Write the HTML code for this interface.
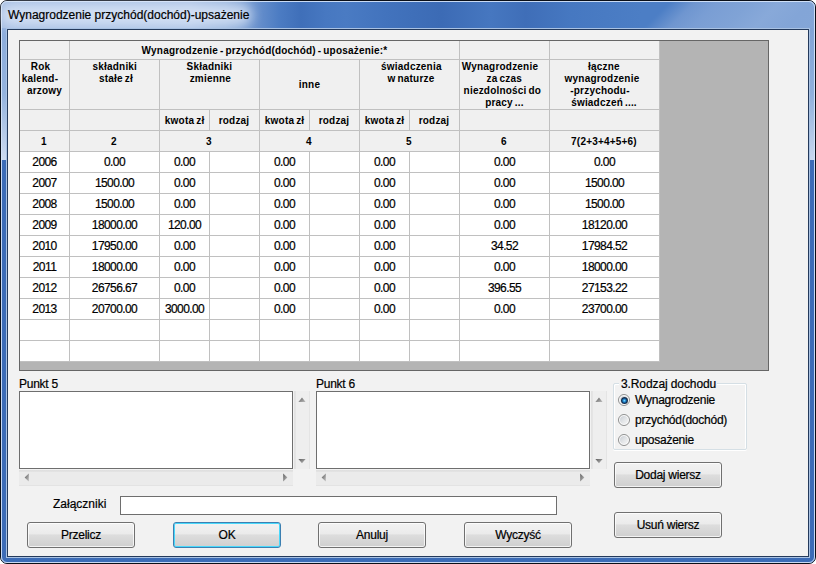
<!DOCTYPE html>
<html><head><meta charset="utf-8">
<style>
*{box-sizing:border-box;margin:0;padding:0}
html,body{width:816px;height:564px;overflow:hidden;background:#fff}
body{position:relative;font-family:"Liberation Sans",sans-serif;font-size:12px;color:#000}
.a{position:absolute}
#win{left:0;top:0;width:816px;height:564px;border:1px solid #0a0f18;border-radius:7px 7px 7px 7px;
 background:linear-gradient(to right,#a4bde3 0px,#a9c1e5 190px,#94b2dc 225px,#6d94ce 252px,#4c7cc3 278px,#3f6fb9 300px,#4778c1 325px,#4a7bc3 345px,#4273bd 385px,#3c6bb5 440px,#4677c0 490px,#3f6eb8 525px,#4678c1 570px,#4c7ec5 640px,#4c7ec5 816px)}
#tbr{left:600px;top:1px;width:215px;height:28px;border-radius:0 6px 0 0;background:linear-gradient(135deg,rgba(76,126,197,0) 0px,rgba(76,126,197,0) 50px,#6f96d0 68px,#7a9ed4 84px,#80a3d6 108px,#88a9d9 128px,#83a5d7 150px,#84a6d7 172px)}
#hl{left:1px;top:1px;width:814px;height:562px;border:1px solid rgba(215,230,250,.9);border-radius:6px 6px 6px 6px}
#side{left:1px;top:29px;width:814px;height:534px;background:#3c6cb7;border-radius:0 0 6px 6px}
#sl{left:1px;top:28px;width:7px;height:132px;background:linear-gradient(#8cacdb 0%,#94b3de 50%,#cddbf0 100%)}
#sr{left:808px;top:28px;width:7px;height:132px;background:linear-gradient(#82a4d6 0%,#8fb0dc 50%,#c8d7ee 100%)}
#glow{left:0px;top:4px;width:252px;height:22px;border-radius:11px;background:rgba(224,234,248,.75);filter:blur(6px)}
#title{left:8px;top:8px;font-size:12px;line-height:14px;color:#000;white-space:pre;-webkit-text-stroke:0.2px #000}
#cl1{left:6px;top:28px;width:804px;height:530px;border:1px solid #a9c2e3}
#cl2{left:7px;top:29px;width:802px;height:528px;border:1px solid #243a5c;background:#f2f2f2}
#cl3{display:none}
#gridout{display:none}
#grid{left:19px;top:40px;width:750px;height:331px;border:1px solid #666;background:#b4b4b4}
.hc{position:absolute;background:#f0f0f0}
.dc{position:absolute;background:#fff}
.ht{position:absolute;font-weight:bold;font-size:10px;text-align:center;line-height:12px;white-space:pre;letter-spacing:0.2px;word-spacing:-1px}
.dt{position:absolute;font-size:12px;text-align:center;letter-spacing:-0.6px;white-space:pre;line-height:20px;-webkit-text-stroke:0.2px #000}
.lbl{position:absolute;font-size:12px;line-height:14px;white-space:pre;-webkit-text-stroke:0.2px #000;letter-spacing:-0.25px}
.tb{position:absolute;background:#fff;border:1px solid #6e6e6e}
.sbv{position:absolute;background:linear-gradient(to right,#e1e1e1 0px,#e5e5e5 2px,#eeeeee 2px,#eeeeee 15px,#e4e4e4 15px,#e4e4e4 16px)}
.sbh{position:absolute;background:linear-gradient(#dedede 0px,#e4e4e4 2px,#ebebeb 2px,#ebebeb 15px,#e3e3e3 15px,#e3e3e3 16px)}
.btn{position:absolute;border:1px solid #707070;border-radius:3px;background:linear-gradient(#f2f2f2 0%,#ebebeb 45%,#dddddd 50%,#cfcfcf 100%);box-shadow:inset 0 0 0 1px rgba(255,255,255,.75);text-align:center;font-size:12px;line-height:24px;white-space:pre;-webkit-text-stroke:0.2px #000;letter-spacing:-0.25px}
.btn.def{border-color:#3c7fb1;box-shadow:inset 0 0 0 1px #48d8fb}
.radio{position:absolute;width:12px;height:12px;border-radius:50%;border:1px solid #8e8f8f;background:#fcfcfc}
.radio::after{content:"";position:absolute;left:1px;top:1px;width:8px;height:8px;border-radius:50%;background:linear-gradient(135deg,#c9ced4 0%,#e4e6e8 55%,#f6f6f6 100%)}
.dot{position:absolute;left:1.5px;top:1.5px;width:7px;height:7px;border-radius:50%;z-index:2;background:radial-gradient(circle closest-side at 48% 52%,#8fe0ff 0%,#2e9ce0 32%,#17609e 58%,#0e2c4f 82%,#2a3b52 100%)}
</style></head><body>
<svg class="a" style="left:0;top:0" width="0" height="0"><defs>
<linearGradient id="gu" x1="0" y1="0" x2="1" y2="1"><stop offset="0" stop-color="#5c5c5c"/><stop offset="1" stop-color="#bdbdbd"/></linearGradient>
<linearGradient id="gd" x1="0" y1="0" x2="1" y2="1"><stop offset="0" stop-color="#5c5c5c"/><stop offset="1" stop-color="#bdbdbd"/></linearGradient>
<linearGradient id="gl" x1="0" y1="0" x2="1" y2="1"><stop offset="0" stop-color="#5c5c5c"/><stop offset="1" stop-color="#c4c4c4"/></linearGradient>
<linearGradient id="gr" x1="0" y1="0" x2="1" y2="1"><stop offset="0" stop-color="#5c5c5c"/><stop offset="1" stop-color="#c4c4c4"/></linearGradient>
</defs></svg>
<div id="win" class="a"></div>
<div id="tbr" class="a"></div>
<div id="side" class="a"></div>
<div id="sl" class="a"></div>
<div id="sr" class="a"></div>
<div id="hl" class="a"></div>
<div id="glow" class="a"></div>
<div id="title" class="a">Wynagrodzenie przychód(dochód)-upsażenie</div>
<div id="cl1" class="a"></div>
<div id="cl2" class="a"></div>
<div id="cl3" class="a"></div>

<div id="gridout" class="a"></div>
<div id="grid" class="a"></div>
<div class="a" style="left:20px;top:41px;width:640px;height:321px;background:#c0c0c0"></div>
<div class="hc" style="left:20px;top:41px;width:49px;height:18px;"></div>
<div class="hc" style="left:70px;top:41px;width:389px;height:18px;"></div>
<div class="hc" style="left:460px;top:41px;width:89px;height:18px;"></div>
<div class="hc" style="left:550px;top:41px;width:109px;height:18px;"></div>
<div class="hc" style="left:20px;top:60px;width:49px;height:49px;"></div>
<div class="hc" style="left:70px;top:60px;width:89px;height:49px;"></div>
<div class="hc" style="left:160px;top:60px;width:99px;height:49px;"></div>
<div class="hc" style="left:260px;top:60px;width:99px;height:49px;"></div>
<div class="hc" style="left:360px;top:60px;width:99px;height:49px;"></div>
<div class="hc" style="left:460px;top:60px;width:89px;height:49px;"></div>
<div class="hc" style="left:550px;top:60px;width:109px;height:49px;"></div>
<div class="hc" style="left:20px;top:110px;width:49px;height:20px;"></div>
<div class="hc" style="left:70px;top:110px;width:89px;height:20px;"></div>
<div class="hc" style="left:160px;top:110px;width:49px;height:20px;"></div>
<div class="hc" style="left:210px;top:110px;width:49px;height:20px;"></div>
<div class="hc" style="left:260px;top:110px;width:49px;height:20px;"></div>
<div class="hc" style="left:310px;top:110px;width:49px;height:20px;"></div>
<div class="hc" style="left:360px;top:110px;width:49px;height:20px;"></div>
<div class="hc" style="left:410px;top:110px;width:49px;height:20px;"></div>
<div class="hc" style="left:460px;top:110px;width:89px;height:20px;"></div>
<div class="hc" style="left:550px;top:110px;width:109px;height:20px;"></div>
<div class="hc" style="left:20px;top:131px;width:49px;height:20px;"></div>
<div class="hc" style="left:70px;top:131px;width:89px;height:20px;"></div>
<div class="hc" style="left:160px;top:131px;width:99px;height:20px;"></div>
<div class="hc" style="left:260px;top:131px;width:99px;height:20px;"></div>
<div class="hc" style="left:360px;top:131px;width:99px;height:20px;"></div>
<div class="hc" style="left:460px;top:131px;width:89px;height:20px;"></div>
<div class="hc" style="left:550px;top:131px;width:109px;height:20px;"></div>
<div class="dc" style="left:20px;top:152px;width:49px;height:20px;"></div>
<div class="dc" style="left:70px;top:152px;width:89px;height:20px;"></div>
<div class="dc" style="left:160px;top:152px;width:49px;height:20px;"></div>
<div class="dc" style="left:210px;top:152px;width:49px;height:20px;"></div>
<div class="dc" style="left:260px;top:152px;width:49px;height:20px;"></div>
<div class="dc" style="left:310px;top:152px;width:49px;height:20px;"></div>
<div class="dc" style="left:360px;top:152px;width:49px;height:20px;"></div>
<div class="dc" style="left:410px;top:152px;width:49px;height:20px;"></div>
<div class="dc" style="left:460px;top:152px;width:89px;height:20px;"></div>
<div class="dc" style="left:550px;top:152px;width:109px;height:20px;"></div>
<div class="dc" style="left:20px;top:173px;width:49px;height:20px;"></div>
<div class="dc" style="left:70px;top:173px;width:89px;height:20px;"></div>
<div class="dc" style="left:160px;top:173px;width:49px;height:20px;"></div>
<div class="dc" style="left:210px;top:173px;width:49px;height:20px;"></div>
<div class="dc" style="left:260px;top:173px;width:49px;height:20px;"></div>
<div class="dc" style="left:310px;top:173px;width:49px;height:20px;"></div>
<div class="dc" style="left:360px;top:173px;width:49px;height:20px;"></div>
<div class="dc" style="left:410px;top:173px;width:49px;height:20px;"></div>
<div class="dc" style="left:460px;top:173px;width:89px;height:20px;"></div>
<div class="dc" style="left:550px;top:173px;width:109px;height:20px;"></div>
<div class="dc" style="left:20px;top:194px;width:49px;height:20px;"></div>
<div class="dc" style="left:70px;top:194px;width:89px;height:20px;"></div>
<div class="dc" style="left:160px;top:194px;width:49px;height:20px;"></div>
<div class="dc" style="left:210px;top:194px;width:49px;height:20px;"></div>
<div class="dc" style="left:260px;top:194px;width:49px;height:20px;"></div>
<div class="dc" style="left:310px;top:194px;width:49px;height:20px;"></div>
<div class="dc" style="left:360px;top:194px;width:49px;height:20px;"></div>
<div class="dc" style="left:410px;top:194px;width:49px;height:20px;"></div>
<div class="dc" style="left:460px;top:194px;width:89px;height:20px;"></div>
<div class="dc" style="left:550px;top:194px;width:109px;height:20px;"></div>
<div class="dc" style="left:20px;top:215px;width:49px;height:20px;"></div>
<div class="dc" style="left:70px;top:215px;width:89px;height:20px;"></div>
<div class="dc" style="left:160px;top:215px;width:49px;height:20px;"></div>
<div class="dc" style="left:210px;top:215px;width:49px;height:20px;"></div>
<div class="dc" style="left:260px;top:215px;width:49px;height:20px;"></div>
<div class="dc" style="left:310px;top:215px;width:49px;height:20px;"></div>
<div class="dc" style="left:360px;top:215px;width:49px;height:20px;"></div>
<div class="dc" style="left:410px;top:215px;width:49px;height:20px;"></div>
<div class="dc" style="left:460px;top:215px;width:89px;height:20px;"></div>
<div class="dc" style="left:550px;top:215px;width:109px;height:20px;"></div>
<div class="dc" style="left:20px;top:236px;width:49px;height:20px;"></div>
<div class="dc" style="left:70px;top:236px;width:89px;height:20px;"></div>
<div class="dc" style="left:160px;top:236px;width:49px;height:20px;"></div>
<div class="dc" style="left:210px;top:236px;width:49px;height:20px;"></div>
<div class="dc" style="left:260px;top:236px;width:49px;height:20px;"></div>
<div class="dc" style="left:310px;top:236px;width:49px;height:20px;"></div>
<div class="dc" style="left:360px;top:236px;width:49px;height:20px;"></div>
<div class="dc" style="left:410px;top:236px;width:49px;height:20px;"></div>
<div class="dc" style="left:460px;top:236px;width:89px;height:20px;"></div>
<div class="dc" style="left:550px;top:236px;width:109px;height:20px;"></div>
<div class="dc" style="left:20px;top:257px;width:49px;height:20px;"></div>
<div class="dc" style="left:70px;top:257px;width:89px;height:20px;"></div>
<div class="dc" style="left:160px;top:257px;width:49px;height:20px;"></div>
<div class="dc" style="left:210px;top:257px;width:49px;height:20px;"></div>
<div class="dc" style="left:260px;top:257px;width:49px;height:20px;"></div>
<div class="dc" style="left:310px;top:257px;width:49px;height:20px;"></div>
<div class="dc" style="left:360px;top:257px;width:49px;height:20px;"></div>
<div class="dc" style="left:410px;top:257px;width:49px;height:20px;"></div>
<div class="dc" style="left:460px;top:257px;width:89px;height:20px;"></div>
<div class="dc" style="left:550px;top:257px;width:109px;height:20px;"></div>
<div class="dc" style="left:20px;top:278px;width:49px;height:20px;"></div>
<div class="dc" style="left:70px;top:278px;width:89px;height:20px;"></div>
<div class="dc" style="left:160px;top:278px;width:49px;height:20px;"></div>
<div class="dc" style="left:210px;top:278px;width:49px;height:20px;"></div>
<div class="dc" style="left:260px;top:278px;width:49px;height:20px;"></div>
<div class="dc" style="left:310px;top:278px;width:49px;height:20px;"></div>
<div class="dc" style="left:360px;top:278px;width:49px;height:20px;"></div>
<div class="dc" style="left:410px;top:278px;width:49px;height:20px;"></div>
<div class="dc" style="left:460px;top:278px;width:89px;height:20px;"></div>
<div class="dc" style="left:550px;top:278px;width:109px;height:20px;"></div>
<div class="dc" style="left:20px;top:299px;width:49px;height:20px;"></div>
<div class="dc" style="left:70px;top:299px;width:89px;height:20px;"></div>
<div class="dc" style="left:160px;top:299px;width:49px;height:20px;"></div>
<div class="dc" style="left:210px;top:299px;width:49px;height:20px;"></div>
<div class="dc" style="left:260px;top:299px;width:49px;height:20px;"></div>
<div class="dc" style="left:310px;top:299px;width:49px;height:20px;"></div>
<div class="dc" style="left:360px;top:299px;width:49px;height:20px;"></div>
<div class="dc" style="left:410px;top:299px;width:49px;height:20px;"></div>
<div class="dc" style="left:460px;top:299px;width:89px;height:20px;"></div>
<div class="dc" style="left:550px;top:299px;width:109px;height:20px;"></div>
<div class="dc" style="left:20px;top:320px;width:49px;height:20px;"></div>
<div class="dc" style="left:70px;top:320px;width:89px;height:20px;"></div>
<div class="dc" style="left:160px;top:320px;width:49px;height:20px;"></div>
<div class="dc" style="left:210px;top:320px;width:49px;height:20px;"></div>
<div class="dc" style="left:260px;top:320px;width:49px;height:20px;"></div>
<div class="dc" style="left:310px;top:320px;width:49px;height:20px;"></div>
<div class="dc" style="left:360px;top:320px;width:49px;height:20px;"></div>
<div class="dc" style="left:410px;top:320px;width:49px;height:20px;"></div>
<div class="dc" style="left:460px;top:320px;width:89px;height:20px;"></div>
<div class="dc" style="left:550px;top:320px;width:109px;height:20px;"></div>
<div class="dc" style="left:20px;top:341px;width:49px;height:20px;"></div>
<div class="dc" style="left:70px;top:341px;width:89px;height:20px;"></div>
<div class="dc" style="left:160px;top:341px;width:49px;height:20px;"></div>
<div class="dc" style="left:210px;top:341px;width:49px;height:20px;"></div>
<div class="dc" style="left:260px;top:341px;width:49px;height:20px;"></div>
<div class="dc" style="left:310px;top:341px;width:49px;height:20px;"></div>
<div class="dc" style="left:360px;top:341px;width:49px;height:20px;"></div>
<div class="dc" style="left:410px;top:341px;width:49px;height:20px;"></div>
<div class="dc" style="left:460px;top:341px;width:89px;height:20px;"></div>
<div class="dc" style="left:550px;top:341px;width:109px;height:20px;"></div>
<div class="ht" style="left:64.5px;top:44.5px;width:400px">Wynagrodzenie - przychód(dochód) - uposażenie:*</div>
<div class="ht" style="left:-159.5px;top:60.5px;width:400px">Rok</div>
<div class="ht" style="left:-160.0px;top:72.5px;width:400px">kalend-</div>
<div class="ht" style="left:-155.5px;top:84.5px;width:400px">arzowy</div>
<div class="ht" style="left:-85.2px;top:60.5px;width:400px">składniki</div>
<div class="ht" style="left:-84.0px;top:72.5px;width:400px">stałe zł</div>
<div class="ht" style="left:9.4px;top:60.5px;width:400px">Składniki</div>
<div class="ht" style="left:10.4px;top:72.5px;width:400px">zmienne</div>
<div class="ht" style="left:109.5px;top:78.5px;width:400px">inne</div>
<div class="ht" style="left:211.4px;top:60.5px;width:400px">świadczenia</div>
<div class="ht" style="left:211.0px;top:72.5px;width:400px">w naturze</div>
<div class="ht" style="left:300.0px;top:60.5px;width:400px">Wynagrodzenie</div>
<div class="ht" style="left:304.3px;top:72.5px;width:400px">za czas</div>
<div class="ht" style="left:302.4px;top:84.5px;width:400px">niezdolności do</div>
<div class="ht" style="left:304.5px;top:96.5px;width:400px">pracy ...</div>
<div class="ht" style="left:404.0px;top:60.5px;width:400px">łączne</div>
<div class="ht" style="left:402.0px;top:72.5px;width:400px">wynagrodzenie</div>
<div class="ht" style="left:400.0px;top:84.5px;width:400px">-przychodu-</div>
<div class="ht" style="left:404.0px;top:96.5px;width:400px">świadczeń ....</div>
<div class="ht" style="left:-15.4px;top:114.5px;width:400px">kwota zł</div>
<div class="ht" style="left:34.0px;top:114.5px;width:400px">rodzaj</div>
<div class="ht" style="left:84.6px;top:114.5px;width:400px">kwota zł</div>
<div class="ht" style="left:134.0px;top:114.5px;width:400px">rodzaj</div>
<div class="ht" style="left:184.6px;top:114.5px;width:400px">kwota zł</div>
<div class="ht" style="left:234.0px;top:114.5px;width:400px">rodzaj</div>
<div class="ht" style="left:-156.0px;top:135.5px;width:400px">1</div>
<div class="ht" style="left:-86.0px;top:135.5px;width:400px">2</div>
<div class="ht" style="left:9.0px;top:135.5px;width:400px">3</div>
<div class="ht" style="left:109.0px;top:135.5px;width:400px">4</div>
<div class="ht" style="left:209.0px;top:135.5px;width:400px">5</div>
<div class="ht" style="left:304.0px;top:135.5px;width:400px">6</div>
<div class="ht" style="left:404.0px;top:135.5px;width:400px">7(2+3+4+5+6)</div>
<div class="dt" style="left:20px;top:152px;width:49px">2006</div>
<div class="dt" style="left:70px;top:152px;width:89px">0.00</div>
<div class="dt" style="left:160px;top:152px;width:49px">0.00</div>
<div class="dt" style="left:260px;top:152px;width:49px">0.00</div>
<div class="dt" style="left:360px;top:152px;width:49px">0.00</div>
<div class="dt" style="left:460px;top:152px;width:89px">0.00</div>
<div class="dt" style="left:550px;top:152px;width:109px">0.00</div>
<div class="dt" style="left:20px;top:173px;width:49px">2007</div>
<div class="dt" style="left:70px;top:173px;width:89px">1500.00</div>
<div class="dt" style="left:160px;top:173px;width:49px">0.00</div>
<div class="dt" style="left:260px;top:173px;width:49px">0.00</div>
<div class="dt" style="left:360px;top:173px;width:49px">0.00</div>
<div class="dt" style="left:460px;top:173px;width:89px">0.00</div>
<div class="dt" style="left:550px;top:173px;width:109px">1500.00</div>
<div class="dt" style="left:20px;top:194px;width:49px">2008</div>
<div class="dt" style="left:70px;top:194px;width:89px">1500.00</div>
<div class="dt" style="left:160px;top:194px;width:49px">0.00</div>
<div class="dt" style="left:260px;top:194px;width:49px">0.00</div>
<div class="dt" style="left:360px;top:194px;width:49px">0.00</div>
<div class="dt" style="left:460px;top:194px;width:89px">0.00</div>
<div class="dt" style="left:550px;top:194px;width:109px">1500.00</div>
<div class="dt" style="left:20px;top:215px;width:49px">2009</div>
<div class="dt" style="left:70px;top:215px;width:89px">18000.00</div>
<div class="dt" style="left:160px;top:215px;width:49px">120.00</div>
<div class="dt" style="left:260px;top:215px;width:49px">0.00</div>
<div class="dt" style="left:360px;top:215px;width:49px">0.00</div>
<div class="dt" style="left:460px;top:215px;width:89px">0.00</div>
<div class="dt" style="left:550px;top:215px;width:109px">18120.00</div>
<div class="dt" style="left:20px;top:236px;width:49px">2010</div>
<div class="dt" style="left:70px;top:236px;width:89px">17950.00</div>
<div class="dt" style="left:160px;top:236px;width:49px">0.00</div>
<div class="dt" style="left:260px;top:236px;width:49px">0.00</div>
<div class="dt" style="left:360px;top:236px;width:49px">0.00</div>
<div class="dt" style="left:460px;top:236px;width:89px">34.52</div>
<div class="dt" style="left:550px;top:236px;width:109px">17984.52</div>
<div class="dt" style="left:20px;top:257px;width:49px">2011</div>
<div class="dt" style="left:70px;top:257px;width:89px">18000.00</div>
<div class="dt" style="left:160px;top:257px;width:49px">0.00</div>
<div class="dt" style="left:260px;top:257px;width:49px">0.00</div>
<div class="dt" style="left:360px;top:257px;width:49px">0.00</div>
<div class="dt" style="left:460px;top:257px;width:89px">0.00</div>
<div class="dt" style="left:550px;top:257px;width:109px">18000.00</div>
<div class="dt" style="left:20px;top:278px;width:49px">2012</div>
<div class="dt" style="left:70px;top:278px;width:89px">26756.67</div>
<div class="dt" style="left:160px;top:278px;width:49px">0.00</div>
<div class="dt" style="left:260px;top:278px;width:49px">0.00</div>
<div class="dt" style="left:360px;top:278px;width:49px">0.00</div>
<div class="dt" style="left:460px;top:278px;width:89px">396.55</div>
<div class="dt" style="left:550px;top:278px;width:109px">27153.22</div>
<div class="dt" style="left:20px;top:299px;width:49px">2013</div>
<div class="dt" style="left:70px;top:299px;width:89px">20700.00</div>
<div class="dt" style="left:160px;top:299px;width:49px">3000.00</div>
<div class="dt" style="left:260px;top:299px;width:49px">0.00</div>
<div class="dt" style="left:360px;top:299px;width:49px">0.00</div>
<div class="dt" style="left:460px;top:299px;width:89px">0.00</div>
<div class="dt" style="left:550px;top:299px;width:109px">23700.00</div>

<div class="lbl" style="left:19px;top:377px">Punkt 5</div>
<div class="tb" style="left:19px;top:391px;width:274px;height:78px"></div>
<div class="sbv" style="left:294px;top:391px;width:16px;height:78px"></div>
<div class="sbh" style="left:19px;top:470px;width:274px;height:16px"></div>

<svg class="a" style="left:298px;top:397px" width="8" height="6"><polygon points="4,0.6 7.6,4.9 0.4,4.9" fill="url(#gu)"/></svg>
<svg class="a" style="left:298px;top:458px" width="8" height="6"><polygon points="0.4,0.9 7.6,0.9 4,5.2" fill="url(#gd)"/></svg>
<svg class="a" style="left:24px;top:473px" width="6" height="9"><polygon points="0.6,4.5 4.8,0.4 4.8,8.6" fill="url(#gl)"/></svg>
<svg class="a" style="left:283px;top:473px" width="6" height="9"><polygon points="0.2,0.4 4.4,4.5 0.2,8.6" fill="url(#gr)"/></svg>
<div class="lbl" style="left:316px;top:377px">Punkt 6</div>
<div class="tb" style="left:316px;top:391px;width:274px;height:78px"></div>
<div class="sbv" style="left:591px;top:391px;width:16px;height:78px"></div>
<div class="sbh" style="left:316px;top:470px;width:274px;height:16px"></div>

<svg class="a" style="left:595px;top:397px" width="8" height="6"><polygon points="4,0.6 7.6,4.9 0.4,4.9" fill="url(#gu)"/></svg>
<svg class="a" style="left:595px;top:458px" width="8" height="6"><polygon points="0.4,0.9 7.6,0.9 4,5.2" fill="url(#gd)"/></svg>
<svg class="a" style="left:321px;top:473px" width="6" height="9"><polygon points="0.6,4.5 4.8,0.4 4.8,8.6" fill="url(#gl)"/></svg>
<svg class="a" style="left:580px;top:473px" width="6" height="9"><polygon points="0.2,0.4 4.4,4.5 0.2,8.6" fill="url(#gr)"/></svg>
<div class="a" style="left:613px;top:383px;width:134px;height:67px;border:1px solid #d5dfe5;border-radius:2px;box-shadow:inset 1px 1px 0 #fff,inset -1px 0 0 #fff,0 1px 0 #fff"></div>
<div class="lbl" style="left:619px;top:377px;padding:0 1px 0 2px;background:#f2f2f2;letter-spacing:-0.1px">3.Rodzaj dochodu</div>
<div class="radio" style="left:618px;top:394px"><div class="dot"></div></div>
<div class="lbl" style="left:635px;top:393px">Wynagrodzenie</div>
<div class="radio" style="left:618px;top:414px"></div>
<div class="lbl" style="left:635px;top:413px">przychód(dochód)</div>
<div class="radio" style="left:618px;top:434px"></div>
<div class="lbl" style="left:635px;top:433px">uposażenie</div>

<div class="btn" style="left:614px;top:462px;width:108px;height:26px">Dodaj wiersz</div>
<div class="btn" style="left:614px;top:512px;width:108px;height:26px">Usuń wiersz</div>

<div class="lbl" style="left:53px;top:497px;letter-spacing:0">Załączniki</div>
<div class="tb" style="left:120px;top:496px;width:437px;height:19px"></div>

<div class="btn" style="left:27px;top:522px;width:108px;height:26px">Przelicz</div>
<div class="btn def" style="left:173px;top:522px;width:108px;height:26px">OK</div>
<div class="btn" style="left:318px;top:522px;width:108px;height:26px">Anuluj</div>
<div class="btn" style="left:464px;top:522px;width:108px;height:26px">Wyczyść</div>
</body></html>
